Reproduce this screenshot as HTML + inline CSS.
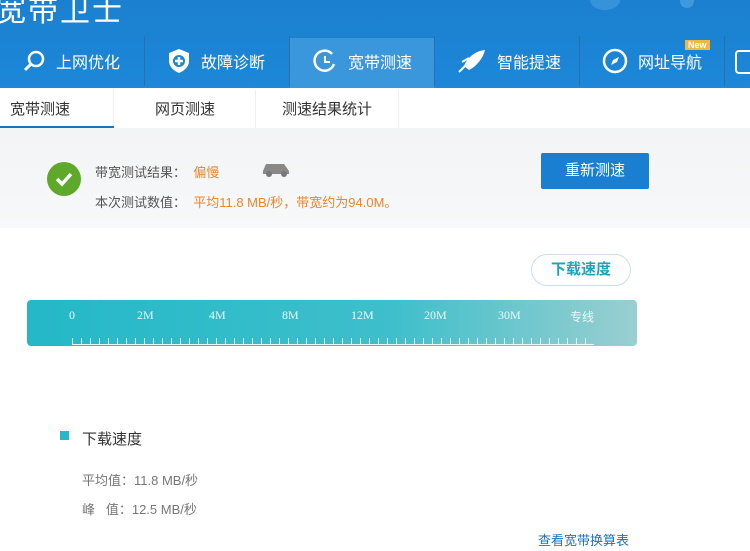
<!DOCTYPE html>
<html><head><meta charset="utf-8"><style>
body{margin:0;width:750px;height:551px;overflow:hidden;font-family:"Liberation Sans","Noto Sans CJK SC",sans-serif;background:#fff;position:relative}
.top{position:absolute;left:0;top:0;width:750px;height:88px;background:linear-gradient(#1b80cf,#1d87d8)}
.title{position:absolute;left:-4px;top:-14px;color:#fff;font-size:30px;letter-spacing:2px}
.ni{position:absolute;top:36px;height:50px;width:144px;display:flex;align-items:center;color:#fff;font-size:16px;border-right:1px solid #2a6fae}
.ni svg{margin:0 10px 0 22px}
.act2{position:absolute;left:290px;top:38px;width:144px;height:50px;background:#3a97dc}
.tabs{position:absolute;top:88px;left:0;width:750px;height:40px;background:#fff}
.tab{position:absolute;top:2px;height:40px;line-height:40px;font-size:15px;color:#333;text-align:center;border-right:1px solid #eee}
.gray{position:absolute;top:128px;left:0;width:750px;height:100px;background:linear-gradient(#f3f4f5,#f7f8f9)}
</style></head><body>
<div class="top"><div class="title">宽带卫士</div>
<div style="position:absolute;left:590px;top:-10px;width:30px;height:20px;border-radius:50%;background:#4aa0e0;opacity:.6"></div>
<div style="position:absolute;left:680px;top:-6px;width:14px;height:14px;border-radius:50%;background:#5aaae4;opacity:.6"></div>
</div>
<div class="act2"></div>
<div class="ni" style="left:0"><svg width="24" height="24" viewBox="0 0 24 24"><circle cx="14" cy="10" r="7" fill="none" stroke="#fff" stroke-width="2.5"/><path d="M9 15 L3 21" stroke="#fff" stroke-width="3"/></svg>上网优化</div>
<div class="ni" style="left:145px"><svg width="24" height="26" viewBox="0 0 24 26"><path d="M12 1 L22 5 V13 C22 19 17 23 12 25 C7 23 2 19 2 13 V5Z" fill="#fff"/><circle cx="12" cy="13" r="6" fill="#1d84d4"/><path d="M12 9v8M8 13h8" stroke="#fff" stroke-width="2.5"/></svg>故障诊断</div>
<div class="ni" style="left:290px"><svg width="26" height="26" viewBox="0 0 26 26"><path d="M20 6 A10 10 0 1 0 22 16" fill="none" stroke="#fff" stroke-width="2.5"/><path d="M13 8v6h5" stroke="#fff" stroke-width="2" fill="none"/></svg>宽带测速</div>
<div class="ni" style="left:435px"><svg width="30" height="26" viewBox="0 0 30 26"><path d="M28 2 C18 3 10 10 7 18 L12 22 C20 18 26 10 28 2Z" fill="#fff"/><path d="M2 24 L8 18 M5 14 L12 10" stroke="#fff" stroke-width="2"/></svg>智能提速</div>
<div class="ni" style="left:580px"><svg width="26" height="26" viewBox="0 0 26 26"><circle cx="13" cy="13" r="11" fill="none" stroke="#fff" stroke-width="2.5"/><path d="M17 9 L11 12 L9 17 L15 14Z" fill="#fff"/></svg>网址导航<span style="position:absolute;left:105px;top:4px;background:#f0b840;color:#fff;font-size:9px;padding:0 3px;font-weight:bold">New</span></div>
<div style="position:absolute;left:735px;top:50px;width:20px;height:20px;border:2px solid #fff;border-radius:4px"></div>
<div class="tabs">
<div class="tab" style="left:0;width:114px;text-align:left;padding-left:10px;box-sizing:border-box;top:0;line-height:44px">宽带测速<div style="position:absolute;left:0;bottom:0;width:114px;height:2px;background:#1a73c0"></div></div>
<div class="tab" style="left:115px;width:140px">网页测速</div>
<div class="tab" style="left:256px;width:142px">测速结果统计</div>
</div>
<div class="gray"></div>
<div style="position:absolute;left:47px;top:162px;width:34px;height:34px;border-radius:50%;background:#5ea92a"><svg width="34" height="34"><path d="M10 17 L15 22 L24 12" stroke="#fff" stroke-width="3.5" fill="none"/></svg></div>
<div style="position:absolute;left:95px;top:162px;font-size:13px;color:#555">带宽测试结果：&nbsp;&nbsp;<span style="color:#e8862e">偏慢</span></div>
<svg style="position:absolute;left:260px;top:158px" width="32" height="20"><path d="M3 13 L6 6 H24 L29 13 V16 H3Z" fill="#888"/><circle cx="9" cy="16" r="3" fill="#777"/><circle cx="24" cy="16" r="3" fill="#777"/></svg>
<div style="position:absolute;left:95px;top:192px;font-size:13px;color:#555">本次测试数值：&nbsp;&nbsp;<span style="color:#e8862e">平均11.8 MB/秒，带宽约为94.0M。</span></div>
<div style="position:absolute;left:541px;top:153px;width:108px;height:36px;background:#1a7fd0;color:#fff;font-size:15px;line-height:36px;text-align:center;border-radius:2px">重新测速</div>
<div style="position:absolute;left:531px;top:254px;width:98px;height:30px;border:1px solid #cde;border-radius:16px;background:#fff;color:#1aa6b4;font-size:15px;line-height:30px;text-align:center;font-weight:bold">下载速度</div>
<div style="position:absolute;left:27px;top:300px;width:610px;height:46px;border-radius:4px;background:linear-gradient(90deg,#24b8c8,#3ebfcb 60%,#9acfd0)">
<div style="position:absolute;left:0;top:8px;width:100%;font-size:12px;color:#e6fbfc;font-family:'Liberation Serif',serif">
<span style="position:absolute;left:42px">0</span><span style="position:absolute;left:110px">2M</span><span style="position:absolute;left:182px">4M</span><span style="position:absolute;left:255px">8M</span><span style="position:absolute;left:324px">12M</span><span style="position:absolute;left:397px">20M</span><span style="position:absolute;left:471px">30M</span><span style="position:absolute;left:543px">专线</span></div>
<div style="position:absolute;left:45px;top:38px;width:522px;height:6px;background:repeating-linear-gradient(90deg,#e8f8f8 0 1px,transparent 1px 9px);border-bottom:1px solid #e8f8f8"></div>
</div>
<div style="position:absolute;left:60px;top:431px;width:9px;height:9px;background:#26b8c6"></div>
<div style="position:absolute;left:82px;top:428px;font-size:15px;color:#333">下载速度</div>
<div style="position:absolute;left:82px;top:470px;font-size:13px;color:#777">平均值：11.8 MB/秒</div>
<div style="position:absolute;left:82px;top:499px;font-size:13px;color:#777">峰&nbsp;&nbsp;&nbsp;值：12.5 MB/秒</div>
<div style="position:absolute;left:538px;top:530px;font-size:13px;color:#1a73c0">查看宽带换算表</div>
</body></html>
